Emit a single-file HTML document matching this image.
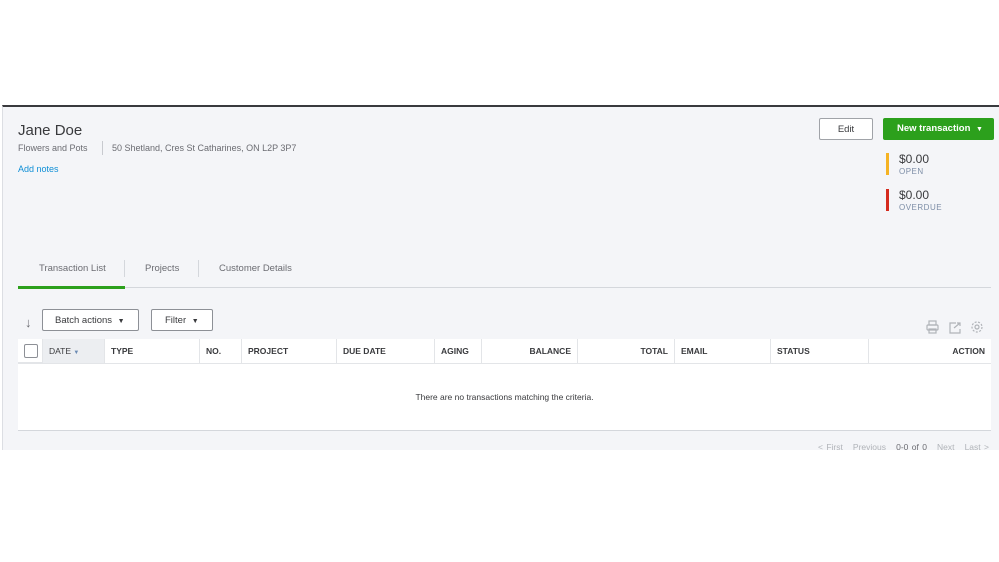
<!DOCTYPE html>
<html><head><style>
*{margin:0;padding:0;box-sizing:border-box}
body{width:999px;height:562px;background:#fff;font-family:"Liberation Sans",sans-serif;position:relative;overflow:hidden}
.p{position:absolute;left:2px;top:105px;width:997px;height:345px;background:#f4f5f8;border-top:2px solid #393a3d;border-left:1px solid #dcdee3}
.a{position:absolute;white-space:nowrap}
.th{position:absolute;top:339px;height:24px;background:#fff;border-left:1px solid #e3e5e8;font-size:8.5px;font-weight:bold;color:#393a3d;line-height:24px;padding:0 6px}
</style></head><body>
<div class="p"></div>
<div class="a" style="left:18px;top:122px;font-size:15px;color:#393a3d">Jane Doe</div>
<div class="a" style="left:18px;top:143px;font-size:9px;color:#6b6c72">Flowers and Pots</div>
<div class="a" style="left:102px;top:141px;width:1px;height:14px;background:#c8cacf"></div>
<div class="a" style="left:112px;top:143px;font-size:9px;color:#6b6c72">50 Shetland, Cres St Catharines, ON L2P 3P7</div>
<div class="a" style="left:18px;top:164px;font-size:9px;color:#0f8fd6">Add notes</div>
<div class="a" style="left:819px;top:118px;width:54px;height:22px;border:1px solid #a0a3a8;border-radius:2px;background:#fff;font-size:9.5px;text-align:center;line-height:21px;color:#393a3d">Edit</div>
<div class="a" style="left:883px;top:118px;width:111px;height:22px;background:#2ca01c;border-radius:2px;color:#fff;font-size:9.5px;font-weight:bold;line-height:22px;padding-left:14px">New transaction <span style="font-size:7px;margin-left:3px">▼</span></div>
<div class="a" style="left:886px;top:153px;width:3px;height:22px;background:#f5b324"></div>
<div class="a" style="left:899px;top:152px;font-size:12px;color:#393a3d">$0.00</div>
<div class="a" style="left:899px;top:167px;font-size:8px;color:#7c8da6;letter-spacing:.5px">OPEN</div>
<div class="a" style="left:886px;top:189px;width:3px;height:22px;background:#d52b1e"></div>
<div class="a" style="left:899px;top:188px;font-size:12px;color:#393a3d">$0.00</div>
<div class="a" style="left:899px;top:203px;font-size:8px;color:#7c8da6;letter-spacing:.5px">OVERDUE</div>
<div class="a" style="left:39px;top:263px;font-size:9.5px;color:#6b6c72">Transaction List</div>
<div class="a" style="left:124px;top:260px;width:1px;height:17px;background:#d4d7dc"></div>
<div class="a" style="left:145px;top:263px;font-size:9.5px;color:#6b6c72">Projects</div>
<div class="a" style="left:198px;top:260px;width:1px;height:17px;background:#d4d7dc"></div>
<div class="a" style="left:219px;top:263px;font-size:9.5px;color:#6b6c72">Customer Details</div>
<div class="a" style="left:18px;top:287px;width:973px;height:1px;background:#d4d7dc"></div>
<div class="a" style="left:18px;top:286px;width:107px;height:3px;background:#2ca01c"></div>
<div class="a" style="left:25px;top:315px;font-size:13px;color:#6b6c72">↓</div>
<div class="a" style="left:42px;top:309px;width:97px;height:22px;border:1px solid #8d9096;border-radius:2px;background:#fff;font-size:9.5px;line-height:21px;padding-left:12px;color:#393a3d">Batch actions <span style="font-size:7px;margin-left:3px">▼</span></div>
<div class="a" style="left:151px;top:309px;width:62px;height:22px;border:1px solid #8d9096;border-radius:2px;background:#fff;font-size:9.5px;line-height:21px;padding-left:13px;color:#393a3d">Filter <span style="font-size:7px;margin-left:3px">▼</span></div>
<svg class="a" style="left:926px;top:320px" width="62" height="14" fill="none" stroke="#b0b3b8" stroke-width="1.2">
<rect x="3" y="1" width="7" height="4"/><rect x="1" y="5" width="11" height="5" rx="1"/><rect x="3" y="9" width="7" height="4"/>
<path d="M30 3h-6v10h10v-4M28 8l6-5M31 3h3v3"/>
<circle cx="51" cy="7" r="2"/><circle cx="51" cy="7" r="5" stroke-dasharray="2 1.5"/>
</svg>
<div class="a" style="left:18px;top:339px;width:973px;height:92px;background:#fff;border-bottom:1px solid #d4d7dc"></div>
<div class="a" style="left:18px;top:362px;width:973px;height:2px;background:#e3e5e8"></div>
<div class="a" style="left:24px;top:344px;width:14px;height:14px;border:1px solid #8d9096;border-radius:2px"></div>
<div class="th" style="left:42px;width:62px;background:#eceef1;font-weight:normal">DATE <span style="font-size:6px;color:#6b8bb3">▼</span></div>
<div class="th" style="left:104px;width:95px">TYPE</div>
<div class="th" style="left:199px;width:42px">NO.</div>
<div class="th" style="left:241px;width:95px">PROJECT</div>
<div class="th" style="left:336px;width:98px">DUE DATE</div>
<div class="th" style="left:434px;width:47px">AGING</div>
<div class="th" style="left:481px;width:96px;text-align:right">BALANCE</div>
<div class="th" style="left:577px;width:97px;text-align:right">TOTAL</div>
<div class="th" style="left:674px;width:96px">EMAIL</div>
<div class="th" style="left:770px;width:98px">STATUS</div>
<div class="th" style="left:868px;width:123px;text-align:right">ACTION</div>
<div class="a" style="left:18px;top:392px;width:973px;text-align:center;font-size:8.5px;color:#393a3d">There are no transactions matching the criteria.</div>
<div class="a" style="left:818px;top:442px;font-size:8.5px;color:#b0b3b8;word-spacing:1px">&lt; First &nbsp; Previous &nbsp; <span style="color:#6b6c72">0-0 of 0</span> &nbsp; Next &nbsp; Last &gt;</div>
</body></html>
